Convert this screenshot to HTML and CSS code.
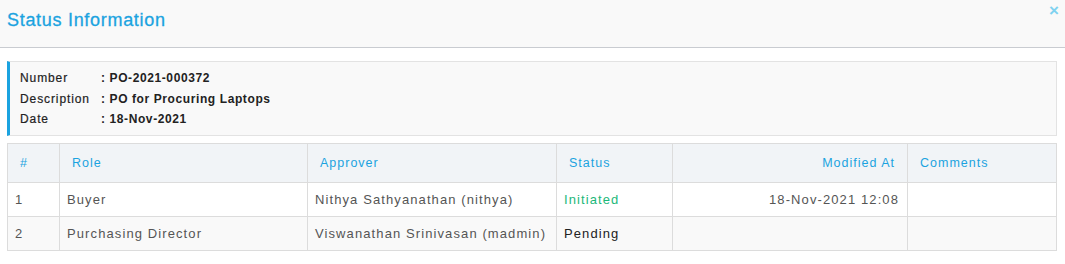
FILE: index.html
```html
<html>
  <head>
    <link rel="stylesheet" href="styles.css">
    <title>Status Information</title>
  </head>
  <body>
    <div class="modal">
      <div class="modal-header">
        <h4>Status Information</h4>
        <span class="close">&times;</span>
      </div>
      <div class="modal-body">
        <div class="info">
          <div class="info-row"><span class="label">Number</span><span>: PO-2021-000372</span></div>
          <div class="info-row"><span class="label">Description</span><span>: PO for Procuring Laptops</span></div>
          <div class="info-row"><span class="label">Date</span><span>: 18-Nov-2021</span></div>
        </div>
        <table class="status-table">
          <thead>
            <tr>
              <th class="col-num">#</th>
              <th class="col-role">Role</th>
              <th class="col-approver">Approver</th>
              <th class="col-status">Status</th>
              <th class="col-date right">Modified At</th>
              <th>Comments</th>
            </tr>
          </thead>
          <tbody>
            <tr>
              <td>1</td>
              <td>Buyer</td>
              <td>Nithya Sathyanathan (nithya)</td>
              <td class="initiated">Initiated</td>
              <td class="right">18-Nov-2021 12:08</td>
              <td></td>
            </tr>
            <tr>
              <td>2</td>
              <td>Purchasing Director</td>
              <td>Viswanathan Srinivasan (madmin)</td>
              <td class="pending">Pending</td>
              <td class="right"></td>
              <td></td>
            </tr>
          </tbody>
        </table>
      </div>
    </div>
  </body>
</html>
```

FILE: styles.css
```css
body {
  margin: 0;
  font-family: "Liberation Sans", Arial, sans-serif;
  background: #fff;
}

.modal-header {
  height: 47px;
  background: #f9f9f9;
  border-bottom: 1px solid #c9ccd1;
  display: flex;
  justify-content: space-between;
  align-items: flex-start;
  padding: 0 6px 0 7px;
}
.modal-header h4 {
  margin: 0;
  padding-top: 10px;
  font-size: 18px;
  font-weight: normal;
  -webkit-text-stroke: 0.3px #1ba3e0;
  letter-spacing: 0.7px;
  color: #1ba3e0;
}
.close {
  color: #7fd2f0;
  font-size: 17px;
  font-weight: bold;
  line-height: 1;
  padding-top: 2px;
}

.modal-body {
  padding: 13px 8px 14px 7px;
}

.info {
  background: #f9f9f9;
  border: 1px solid #e3e3e3;
  border-left: 3px solid #1ba3e0;
  padding: 6px 12px 5px 10px;
  font-size: 12px;
  font-weight: bold;
  color: #222;
  letter-spacing: 0.6px;
}
.info-row {
  line-height: 20.5px;
}
.info .label {
  display: inline-block;
  width: 81px;
  font-weight: normal;
  letter-spacing: 0.9px;
  -webkit-text-stroke: 0.2px #222;
}

.status-table {
  margin-top: 7px;
  width: 100%;
  table-layout: fixed;
  border-collapse: collapse;
  font-size: 13px;
  letter-spacing: 1.1px;
  color: #555;
}
.status-table th,
.status-table td {
  box-sizing: border-box;
  border: 1px solid #dcdcdc;
  text-align: left;
  white-space: nowrap;
}
.status-table th {
  background: #f1f4f7;
  height: 39px;
  padding: 0 12px 0 12px;
  font-weight: normal;
  font-size: 12.5px;
  letter-spacing: 1px;
  color: #1ba3e0;
}
.status-table td {
  height: 34px;
  padding: 0 8px 0 7px;
}
.status-table tbody tr:nth-child(2) td {
  background: #f9f9f9;
}
.status-table .right {
  text-align: right;
}
.col-num { width: 52px; }
.col-role { width: 248px; }
.col-approver { width: 249px; }
.col-status { width: 116px; }
.col-date { width: 235px; }

.initiated {
  color: #1cb87a;
}
.pending {
  color: #222;
}
```
